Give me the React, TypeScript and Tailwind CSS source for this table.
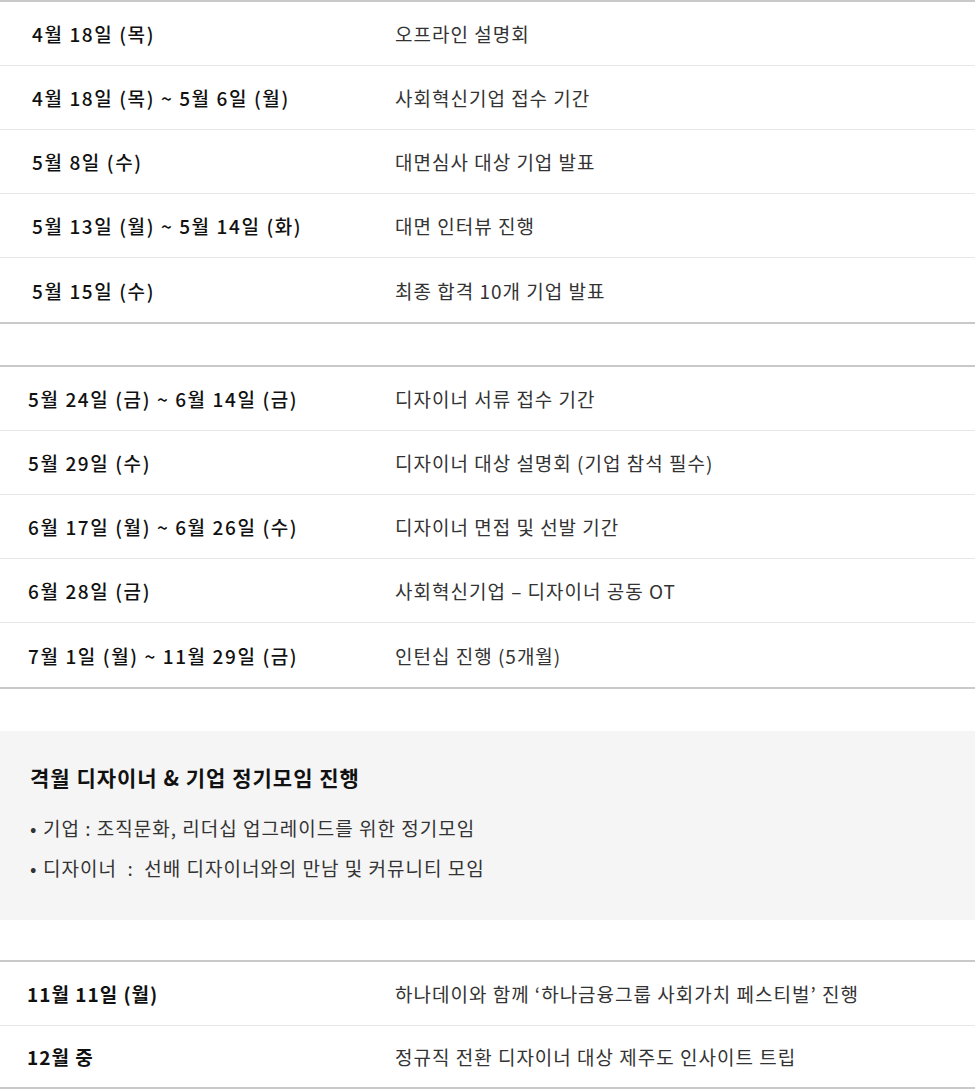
import React from 'react';

type Row = { date: string; text: string; h?: string };

const FIRST: Row[] = [
  { date: '4월 18일 (목)', text: '오프라인 설명회' },
  { date: '4월 18일 (목) ~ 5월 6일 (월)', text: '사회혁신기업 접수 기간' },
  { date: '5월 8일 (수)', text: '대면심사 대상 기업 발표' },
  { date: '5월 13일 (월) ~ 5월 14일 (화)', text: '대면 인터뷰 진행' },
  { date: '5월 15일 (수)', text: '최종 합격 10개 기업 발표' },
];

const SECOND: Row[] = [
  { date: '5월 24일 (금) ~ 6월 14일 (금)', text: '디자이너 서류 접수 기간' },
  { date: '5월 29일 (수)', text: '디자이너 대상 설명회 (기업 참석 필수)' },
  { date: '6월 17일 (월) ~ 6월 26일 (수)', text: '디자이너 면접 및 선발 기간' },
  { date: '6월 28일 (금)', text: '사회혁신기업 – 디자이너 공동 OT' },
  { date: '7월 1일 (월) ~ 11월 29일 (금)', text: '인턴십 진행 (5개월)' },
];

const THIRD: Row[] = [
  { date: '11월 11일 (월)', text: '하나데이와 함께 ‘하나금융그룹 사회가치 페스티벌’ 진행', h: 'h-[64px]' },
  { date: '12월 중', text: '정규직 전환 디자이너 대상 제주도 인사이트 트립', h: 'h-[61px]' },
];

function Schedule({ rows, pad, bold }: { rows: Row[]; pad: string; bold?: boolean }) {
  return (
    <div className="border-y-2 border-[#c9c9c9]">
      {rows.map((r, i) => (
        <div
          key={r.date}
          className={`flex items-center ${r.h ?? 'h-[64px]'} ${i < rows.length - 1 ? 'border-b border-[#e6e6e6]' : ''}`}
        >
          <div
            className={`w-[395px] shrink-0 ${pad} text-[19px] text-[#111] ${
              bold ? 'font-bold' : 'font-medium tracking-[1.6px]'
            }`}
          >
            {r.date}
          </div>
          <div className="text-[19px] text-[#333]">{r.text}</div>
        </div>
      ))}
    </div>
  );
}

export default function App() {
  return (
    <div className="w-[975px] bg-white font-['Noto_Sans_CJK_KR','Noto_Sans',sans-serif] leading-none tracking-[1px]">
      <Schedule rows={FIRST} pad="pl-[32px]" />
      <div className="mt-[41px]">
        <Schedule rows={SECOND} pad="pl-[28px]" />
      </div>

      {/* Regular meetup box */}
      <div className="mt-[42px] h-[189px] bg-[#f5f5f5] pl-[30px] pt-[36px]">
        <h3 className="text-[21px] font-bold text-[#111]">격월 디자이너 &amp; 기업 정기모임 진행</h3>
        <ul className="mt-[30px] flex flex-col gap-[21px] text-[19px] text-[#333]">
          <li className="flex">
            <span className="w-[13px]">•</span>
            <span>기업 : 조직문화, 리더십 업그레이드를 위한 정기모임</span>
          </li>
          <li className="flex">
            <span className="w-[13px]">•</span>
            <span>디자이너&nbsp;&nbsp;:&nbsp;&nbsp;선배 디자이너와의 만남 및 커뮤니티 모임</span>
          </li>
        </ul>
      </div>

      <div className="mt-[40px]">
        <Schedule rows={THIRD} pad="pl-[27px]" bold />
      </div>
    </div>
  );
}
